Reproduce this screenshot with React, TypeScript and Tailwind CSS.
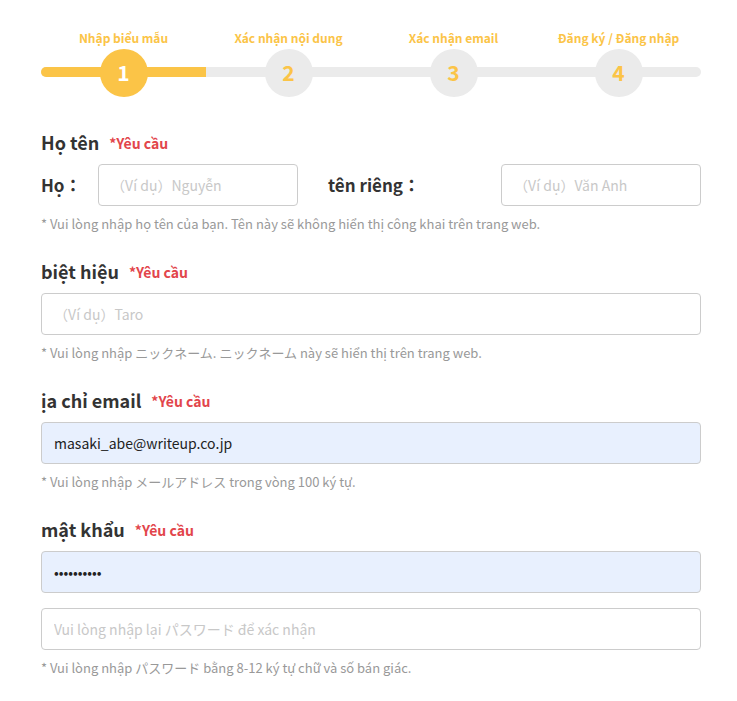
import React from "react";

const FONT = { fontFamily: '"Noto Sans CJK JP", "Noto Sans", sans-serif' };

const STEPS = ["Nhập biểu mẫu", "Xác nhận nội dung", "Xác nhận email", "Đăng ký / Đăng nhập"];

function Stepper() {
  return (
    <div className="relative grid grid-cols-4">
      {/* track behind the circles */}
      <div className="absolute left-0 right-0 top-[39px] h-[10px] rounded-full bg-[#ebebeb]" />
      <div className="absolute left-0 top-[39px] h-[10px] w-1/4 rounded-l-full bg-[#fbc447]" />
      {STEPS.map((label, i) => (
        <div key={label} className="relative flex flex-col items-center">
          <div className="h-[19px] text-[12px] font-bold leading-[19px] text-[#fbc447]">{label}</div>
          <div
            className={`mt-[2px] flex h-12 w-12 items-center justify-center rounded-full text-[21px] font-bold ${
              i === 0 ? "bg-[#fbc447] text-white" : "bg-[#ebebeb] text-[#fbc447]"
            }`}
          >
            {i + 1}
          </div>
        </div>
      ))}
    </div>
  );
}

function Heading({ children }: { children: React.ReactNode }) {
  return (
    <div className="flex h-[26px] items-center gap-[10px]">
      <span className="pb-[2px] text-[18px] font-bold text-[#333]">{children}</span>
      <span className="text-[14px] font-bold text-[#e2454b]">*Yêu cầu</span>
    </div>
  );
}

function Field({
  placeholder,
  value,
  type = "text",
  filled,
  className = "",
}: {
  placeholder?: string;
  value?: string;
  type?: string;
  filled?: boolean;
  className?: string;
}) {
  return (
    <input
      type={type}
      readOnly
      value={value}
      placeholder={placeholder}
      style={FONT}
      className={`h-[42px] rounded-[4px] border border-[#cccccc] px-3 text-[14px] text-[#222] outline-none placeholder:text-[#c8c8c8] ${
        filled ? "bg-[#e8f0fe]" : "bg-white"
      } ${className}`}
    />
  );
}

function Note({ children }: { children: React.ReactNode }) {
  return <p className="mt-2 h-5 text-[13px] leading-5 text-[#999]">{children}</p>;
}

export default function App() {
  return (
    <div className="min-h-screen bg-white" style={FONT}>
      <div className="ml-[41px] w-[660px] pt-[28px]">
        <Stepper />

        <section className="mt-[33px]">
          <Heading>Họ tên</Heading>
          <div className="mt-2 flex items-center">
            <span className="w-[57px] text-[17px] font-bold text-[#333]">Họ：</span>
            <Field placeholder="（Ví dụ）Nguyễn" className="w-[200px]" />
            <span className="ml-[30px] text-[17px] font-bold text-[#333]">tên riêng：</span>
            <Field placeholder="（Ví dụ）Văn Anh" className="ml-auto w-[200px]" />
          </div>
          <Note>* Vui lòng nhập họ tên của bạn. Tên này sẽ không hiển thị công khai trên trang web.</Note>
        </section>

        <section className="mt-[25px]">
          <Heading>biệt hiệu</Heading>
          <Field placeholder="（Ví dụ）Taro" className="mt-2 w-full" />
          <Note>* Vui lòng nhập ニックネーム. ニックネーム này sẽ hiển thị trên trang web.</Note>
        </section>

        <section className="mt-[25px]">
          <Heading>ịa chỉ email</Heading>
          <Field value="masaki_abe@writeup.co.jp" filled className="mt-2 w-full" />
          <Note>* Vui lòng nhập メールアドレス trong vòng 100 ký tự.</Note>
        </section>

        <section className="mt-[25px] pb-10">
          <Heading>mật khẩu</Heading>
          <Field type="password" value="abcdefghij" filled className="mt-2 w-full" />
          <Field placeholder="Vui lòng nhập lại パスワード để xác nhận" className="mt-[15px] w-full" />
          <Note>* Vui lòng nhập パスワード bằng 8-12 ký tự chữ và số bán giác.</Note>
        </section>
      </div>
    </div>
  );
}
